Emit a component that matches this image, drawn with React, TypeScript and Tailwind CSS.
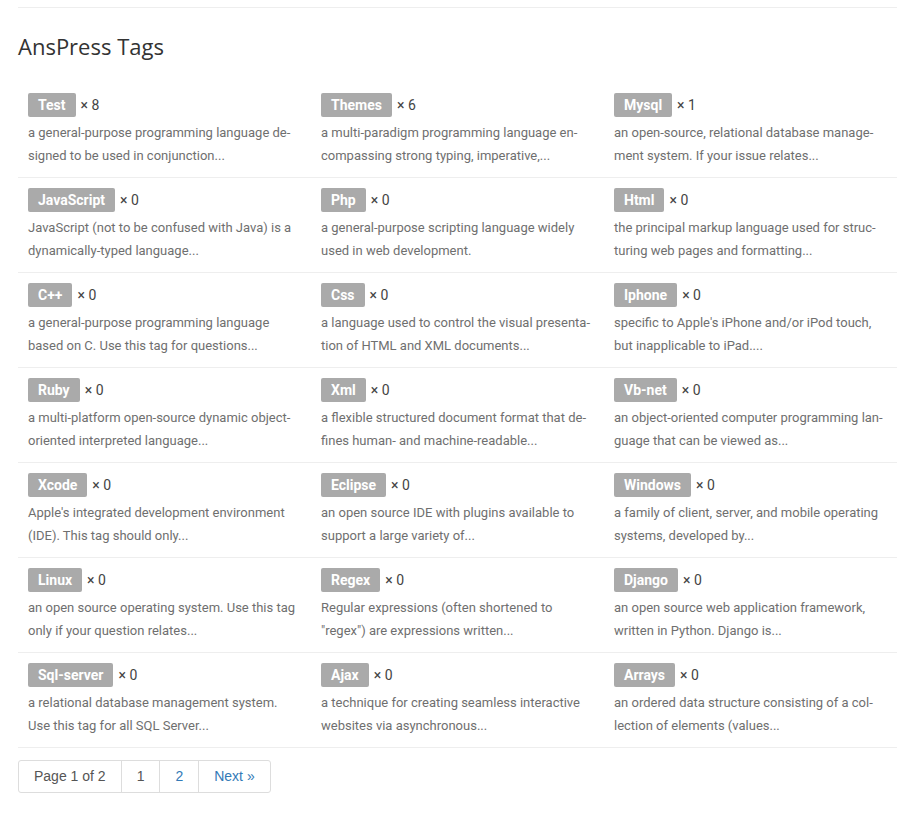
import React from "react";

type Tag = { name: string; count: number; lines: [string, string] };

const tags: Tag[] = [
  { name: "Test", count: 8, lines: ["a general-purpose programming language de-", "signed to be used in conjunction..."] },
  { name: "Themes", count: 6, lines: ["a multi-paradigm programming language en-", "compassing strong typing, imperative,..."] },
  { name: "Mysql", count: 1, lines: ["an open-source, relational database manage-", "ment system. If your issue relates..."] },
  { name: "JavaScript", count: 0, lines: ["JavaScript (not to be confused with Java) is a", "dynamically-typed language..."] },
  { name: "Php", count: 0, lines: ["a general-purpose scripting language widely", "used in web development."] },
  { name: "Html", count: 0, lines: ["the principal markup language used for struc-", "turing web pages and formatting..."] },
  { name: "C++", count: 0, lines: ["a general-purpose programming language", "based on C. Use this tag for questions..."] },
  { name: "Css", count: 0, lines: ["a language used to control the visual presenta-", "tion of HTML and XML documents..."] },
  { name: "Iphone", count: 0, lines: ["specific to Apple's iPhone and/or iPod touch,", "but inapplicable to iPad...."] },
  { name: "Ruby", count: 0, lines: ["a multi-platform open-source dynamic object-", "oriented interpreted language..."] },
  { name: "Xml", count: 0, lines: ["a flexible structured document format that de-", "fines human- and machine-readable..."] },
  { name: "Vb-net", count: 0, lines: ["an object-oriented computer programming lan-", "guage that can be viewed as..."] },
  { name: "Xcode", count: 0, lines: ["Apple's integrated development environment", "(IDE). This tag should only..."] },
  { name: "Eclipse", count: 0, lines: ["an open source IDE with plugins available to", "support a large variety of..."] },
  { name: "Windows", count: 0, lines: ["a family of client, server, and mobile operating", "systems, developed by..."] },
  { name: "Linux", count: 0, lines: ["an open source operating system. Use this tag", "only if your question relates..."] },
  { name: "Regex", count: 0, lines: ["Regular expressions (often shortened to", "\"regex\") are expressions written..."] },
  { name: "Django", count: 0, lines: ["an open source web application framework,", "written in Python. Django is..."] },
  { name: "Sql-server", count: 0, lines: ["a relational database management system.", "Use this tag for all SQL Server..."] },
  { name: "Ajax", count: 0, lines: ["a technique for creating seamless interactive", "websites via asynchronous..."] },
  { name: "Arrays", count: 0, lines: ["an ordered data structure consisting of a col-", "lection of elements (values..."] },
];

export default function App() {
  return (
    <div className="min-h-[816px] bg-white pl-[18px] pr-[16px] pt-[7px]" style={{ fontFamily: "Roboto, 'Liberation Sans', sans-serif" }}>
      <div className="border-t border-[#eeeeee]">
        <h2
          className="mt-[23px] text-[22px] leading-[30px] font-normal text-[#333333]"
          style={{ fontFamily: "'Open Sans', 'Liberation Sans', sans-serif" }}
        >
          AnsPress Tags
        </h2>
        <div className="mt-[22px] grid grid-cols-3">
          {tags.map((t) => (
            <div key={t.name} className="border-b border-[#eeeeee] px-[10px] pt-[10px] pb-[10px]">
              <div className="flex h-[24px] items-center">
                <span className="flex h-[24px] items-center rounded-[2px] bg-[#aaaaaa] px-[10px] text-[14px] font-bold text-white">
                  {t.name}
                </span>
                <span className="ml-[5px] text-[14px] text-[#444444]">× {t.count}</span>
              </div>
              <div className="mt-[4px] whitespace-nowrap text-[13px] leading-[23px] text-[#6f6f6f]">
                {t.lines[0]}
                <br />
                {t.lines[1]}
              </div>
            </div>
          ))}
        </div>
        <div
          className="mt-[12px] inline-flex h-[33px] rounded-[3px] border border-[#dddddd] text-[14px]"
          style={{ fontFamily: "'Liberation Sans', Arial, sans-serif" }}
        >
          <span className="flex items-center px-[15px] text-[#555555]">Page 1 of 2</span>
          <span className="flex items-center border-l border-[#dddddd] px-[15px] text-[#555555]">1</span>
          <span className="flex items-center border-l border-[#dddddd] px-[15px] text-[#337ab7]">2</span>
          <span className="flex items-center border-l border-[#dddddd] px-[15px] text-[#337ab7]">Next »</span>
        </div>
      </div>
    </div>
  );
}
